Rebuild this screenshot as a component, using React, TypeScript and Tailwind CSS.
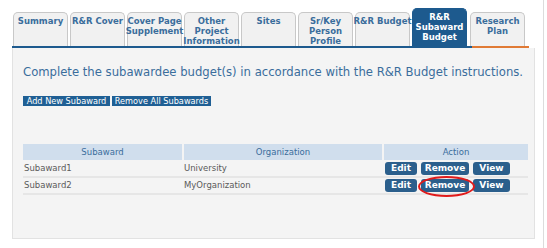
const tabs = [
  ["Summary"],
  ["R&R Cover"],
  ["Cover Page", "Supplement"],
  ["Other", "Project", "Information"],
  ["Sites"],
  ["Sr/Key", "Person", "Profile"],
  ["R&R Budget"],
  ["R&R", "Subaward", "Budget"],
  ["Research", "Plan"],
];

const rows = [
  { name: "Subaward1", org: "University" },
  { name: "Subaward2", org: "MyOrganization" },
];

function ActionButton({ label, width }: { label: string; width: string }) {
  return (
    <span
      className={`flex h-[13px] items-center justify-center rounded-[3px] bg-[#2b5f8c] text-[9px] font-bold leading-none text-white ${width}`}
    >
      {label}
    </span>
  );
}

export default function App() {
  return (
    <div className="relative h-[248px] w-[547px] overflow-hidden bg-white font-['DejaVu_Sans',sans-serif]">
      <div className="absolute right-[3px] top-0 h-full w-px bg-[#dcdcdc]" />
      <div className="ml-[12px] w-[523px] pt-[8px]">
        {/* tab strip */}
        <div className="flex h-[38px] items-end gap-[2px] pl-[1px]">
          {tabs.map((lines, i) => {
            const active = i === 7;
            const last = i === 8;
            return (
              <div
                key={i}
                className={`flex w-[55px] flex-col items-center rounded-t-[5px] border border-b-0 pt-[3px] text-[8.5px] font-bold leading-[10px] ${
                  active
                    ? "h-[38px] border-[#1d5a8e] bg-[#1d5a8e] text-white"
                    : "h-[34px] border-[#c8c8c8] bg-[#f1f1f1] text-[#3a6d9c]"
                } ${last ? "ml-[1px]" : ""}`}
              >
                {lines.map((l) => (
                  <span key={l} className="whitespace-nowrap">
                    {l}
                  </span>
                ))}
              </div>
            );
          })}
        </div>
        <div className="flex h-[2px]">
          <div className="h-[2px] w-[460px] bg-[#1d5a8e]" />
          <div className="h-[2px] w-[57px] bg-[#e07a35]" />
        </div>

        {/* panel */}
        <div className="h-[191px] border border-t-0 border-[#e2e2e2] bg-[#f4f4f4] px-[10px]">
          <p className="whitespace-nowrap pt-[17px] text-[11.65px] leading-[14px] text-[#3a6d9c]">
            Complete the subawardee budget(s) in accordance with the R&amp;R Budget instructions.
          </p>
          <div className="mt-[17px] flex gap-[2px]">
            <span className="flex h-[10px] w-[87px] items-center justify-center whitespace-nowrap bg-[#1f5f94] text-[8.2px] leading-none text-white">
              Add New Subaward
            </span>
            <span className="flex h-[10px] w-[99px] items-center justify-center whitespace-nowrap bg-[#1f5f94] text-[8.2px] leading-none text-white">
              Remove All Subawards
            </span>
          </div>

          <table className="mt-[38px] w-[505px] border-collapse text-[8.5px]">
            <thead>
              <tr className="h-[16px] bg-[#d0deed] text-[#3a6d9c]">
                <th className="w-[160px] border-r-2 border-[#f4f4f4] font-normal">Subaward</th>
                <th className="w-[200px] border-r-2 border-[#f4f4f4] font-normal">Organization</th>
                <th className="font-normal">Action</th>
              </tr>
            </thead>
            <tbody className="text-[#5a5a5a]">
              {rows.map((r, i) => (
                <tr key={r.name} className="h-[17px] border-b-2 border-[#e6e6e6]">
                  <td className="px-[1px]">{r.name}</td>
                  <td className="px-[1px]">{r.org}</td>
                  <td className="px-[2px]">
                    <div className="relative flex gap-[4px]">
                      <ActionButton label="Edit" width="w-[32px]" />
                      <ActionButton label="Remove" width="w-[48px]" />
                      <ActionButton label="View" width="w-[37px]" />
                      {i === 1 && (
                        <span className="absolute left-[33px] top-[-3px] h-[21px] w-[57px] rounded-[50%] border-2 border-[#e01b1b]" />
                      )}
                    </div>
                  </td>
                </tr>
              ))}
            </tbody>
          </table>
        </div>
      </div>
    </div>
  );
}
